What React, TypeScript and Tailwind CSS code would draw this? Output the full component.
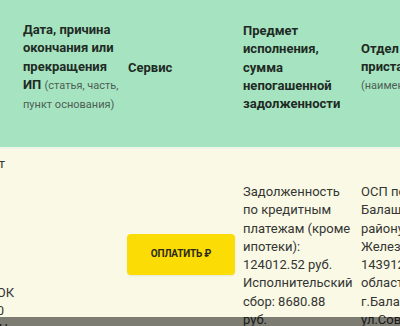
import React from 'react';

const cols = 'grid grid-cols-[125px_96px_108px_110px_160px] gap-x-2 -ml-[110px]';

function Small({ children }: { children: React.ReactNode }) {
  return <span className="text-[11px] font-normal text-[#4d5e54]">{children}</span>;
}

export default function App() {
  // left column is the tail of the document details cell, only its line ends are in view
  const docLines: { text: string; cls: string }[] = [
    { text: 'приказ от', cls: 'pr-[10px]' },
    { text: '12.03.2021', cls: 'pr-[40px]' },
    { text: '№ 2-614/2021,', cls: 'pr-[40px]' },
    { text: 'Судебный', cls: 'pr-[40px]' },
    { text: 'участок', cls: 'pr-[40px]' },
    { text: 'мирового', cls: 'pr-[40px]' },
    { text: 'судьи', cls: 'pr-[40px]' },
    { text: 'УЧАСТОК', cls: 'pr-[1px]' },
    { text: '№ 10', cls: 'pr-[11px]' },
    { text: 'ИЧ', cls: 'pr-[7px]' },
    { text: '5001', cls: 'pr-[40px]' },
  ];

  return (
    <div className="relative w-[400px] h-[326px] overflow-hidden bg-[#f9f9e6] font-['Roboto',sans-serif]">
      {/* header */}
      <div className={`${cols} items-center bg-[#a6e4c1] pt-[21px] pb-[33px] text-[13px] font-bold leading-[18.3px] text-[#1f2b24] whitespace-nowrap`}>
        <div />
        <div>
          Дата, причина<br />
          окончания или<br />
          прекращения<br />
          ИП <Small>(статья, часть,</Small><br />
          <Small>пункт основания)</Small>
        </div>
        <div className="pl-px">Сервис</div>
        <div>
          Предмет<br />
          исполнения,<br />
          сумма<br />
          непогашенной<br />
          задолженности
        </div>
        <div>
          Отдел судебных<br />
          приставов<br />
          <Small>(наименование, адрес)</Small>
        </div>
      </div>

      {/* row */}
      <div className={`${cols} items-center border-t-2 border-[#eef5e8] pt-[6px] pb-2 text-[13px] leading-[18.3px] text-[#353532] whitespace-nowrap`}>
        <div>
          {docLines.map((l, i) => (
            <div key={i} className={`text-right ${l.cls}`}>{l.text}</div>
          ))}
        </div>
        <div />
        <div className="-mt-1">
          <button className="flex h-[41px] w-[108px] items-center justify-center rounded-[4px] bg-[#fcdc05] text-[10px] font-bold tracking-[-0.2px] text-[#2b2a18] shadow-[0_1px_2px_rgba(0,0,0,0.08)]">
            ОПЛАТИТЬ ₽
          </button>
        </div>
        <div>
          Задолженность<br />
          по кредитным<br />
          платежам (кроме<br />
          ипотеки):<br />
          124012.52 руб.<br />
          Исполнительский<br />
          сбор: 8680.88<br />
          руб.
        </div>
        <div>
          ОСП по<br />
          Балашихинскому<br />
          району и г.<br />
          Железнодорожному<br />
          143912, Московская<br />
          область,<br />
          г.Балашиха,<br />
          ул.Советская, д. 24
        </div>
      </div>

      {/* dimmed strip along the bottom edge */}
      <div className="absolute bottom-0 left-0 right-0 h-[9px] bg-black/50" />
    </div>
  );
}
